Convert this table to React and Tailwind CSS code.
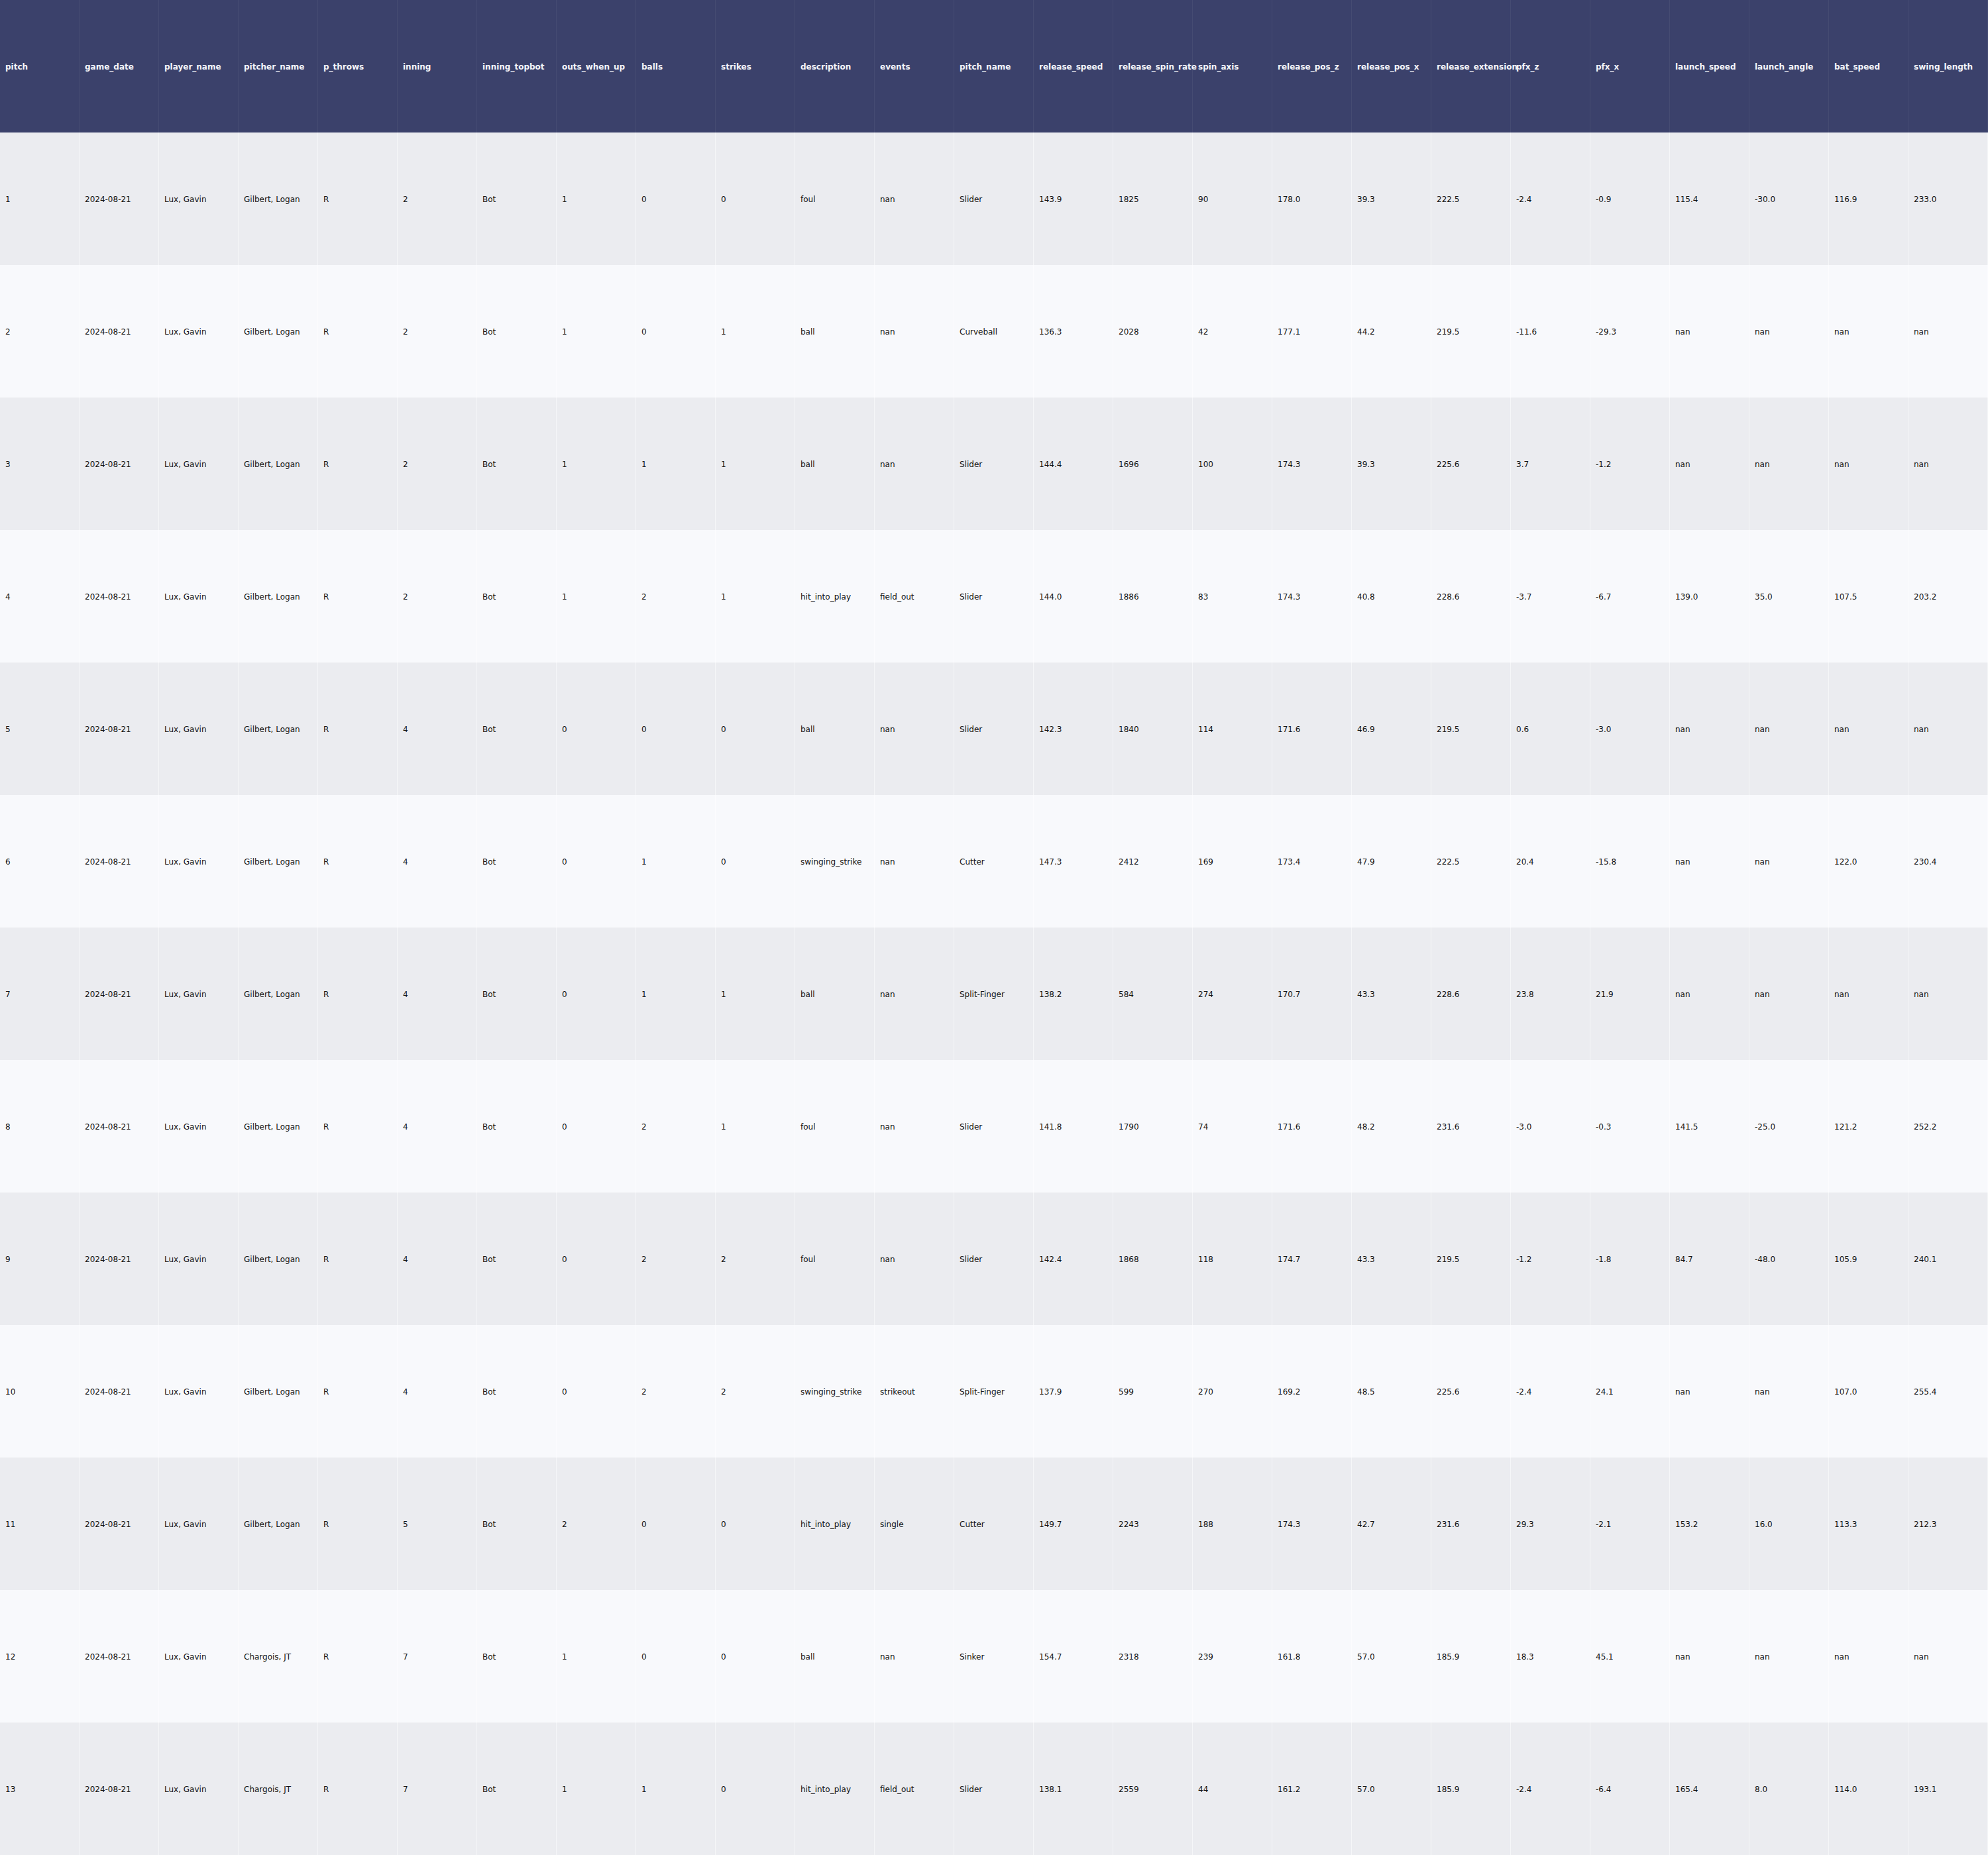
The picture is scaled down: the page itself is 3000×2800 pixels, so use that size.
import React from "react";

const COLS = ["pitch","game_date","player_name","pitcher_name","p_throws","inning","inning_topbot","outs_when_up","balls","strikes","description","events","pitch_name","release_speed","release_spin_rate","spin_axis","release_pos_z","release_pos_x","release_extension","pfx_z","pfx_x","launch_speed","launch_angle","bat_speed","swing_length"];

const G = ["2024-08-21","Lux, Gavin"];
const ROWS = [
  ["1",...G,"Gilbert, Logan","R","2","Bot","1","0","0","foul","nan","Slider","143.9","1825","90","178.0","39.3","222.5","-2.4","-0.9","115.4","-30.0","116.9","233.0"],
  ["2",...G,"Gilbert, Logan","R","2","Bot","1","0","1","ball","nan","Curveball","136.3","2028","42","177.1","44.2","219.5","-11.6","-29.3","nan","nan","nan","nan"],
  ["3",...G,"Gilbert, Logan","R","2","Bot","1","1","1","ball","nan","Slider","144.4","1696","100","174.3","39.3","225.6","3.7","-1.2","nan","nan","nan","nan"],
  ["4",...G,"Gilbert, Logan","R","2","Bot","1","2","1","hit_into_play","field_out","Slider","144.0","1886","83","174.3","40.8","228.6","-3.7","-6.7","139.0","35.0","107.5","203.2"],
  ["5",...G,"Gilbert, Logan","R","4","Bot","0","0","0","ball","nan","Slider","142.3","1840","114","171.6","46.9","219.5","0.6","-3.0","nan","nan","nan","nan"],
  ["6",...G,"Gilbert, Logan","R","4","Bot","0","1","0","swinging_strike","nan","Cutter","147.3","2412","169","173.4","47.9","222.5","20.4","-15.8","nan","nan","122.0","230.4"],
  ["7",...G,"Gilbert, Logan","R","4","Bot","0","1","1","ball","nan","Split-Finger","138.2","584","274","170.7","43.3","228.6","23.8","21.9","nan","nan","nan","nan"],
  ["8",...G,"Gilbert, Logan","R","4","Bot","0","2","1","foul","nan","Slider","141.8","1790","74","171.6","48.2","231.6","-3.0","-0.3","141.5","-25.0","121.2","252.2"],
  ["9",...G,"Gilbert, Logan","R","4","Bot","0","2","2","foul","nan","Slider","142.4","1868","118","174.7","43.3","219.5","-1.2","-1.8","84.7","-48.0","105.9","240.1"],
  ["10",...G,"Gilbert, Logan","R","4","Bot","0","2","2","swinging_strike","strikeout","Split-Finger","137.9","599","270","169.2","48.5","225.6","-2.4","24.1","nan","nan","107.0","255.4"],
  ["11",...G,"Gilbert, Logan","R","5","Bot","2","0","0","hit_into_play","single","Cutter","149.7","2243","188","174.3","42.7","231.6","29.3","-2.1","153.2","16.0","113.3","212.3"],
  ["12",...G,"Chargois, JT","R","7","Bot","1","0","0","ball","nan","Sinker","154.7","2318","239","161.8","57.0","185.9","18.3","45.1","nan","nan","nan","nan"],
  ["13",...G,"Chargois, JT","R","7","Bot","1","1","0","hit_into_play","field_out","Slider","138.1","2559","44","161.2","57.0","185.9","-2.4","-6.4","165.4","8.0","114.0","193.1"],
];

export default function App() {
  return (
    <div className="w-[3000px] h-[2800px] overflow-hidden bg-white text-[12px] leading-none" style={{ fontFamily: '"DejaVu Sans", Verdana, sans-serif' }}>
      <div className="grid grid-cols-[repeat(25,120px)] h-[200px] bg-[#3b416b]">
        {COLS.map((c) => (
          <div key={c} className="flex items-center px-2 pt-[2px] border-r border-white/[0.05] whitespace-nowrap overflow-visible font-bold text-[#f4f5fa]">
            {c}
          </div>
        ))}
      </div>
      {ROWS.map((r, i) => (
        <div key={i} className={`grid grid-cols-[repeat(25,120px)] h-[200px] ${i % 2 === 0 ? "bg-[#ebecf0]" : "bg-[#f8f9fc]"}`}>
          {r.map((v, j) => (
            <div key={j} className="flex items-center px-2 pt-[2px] border-r border-white/50 whitespace-nowrap overflow-visible text-[#111111]">
              {v}
            </div>
          ))}
        </div>
      ))}
    </div>
  );
}
